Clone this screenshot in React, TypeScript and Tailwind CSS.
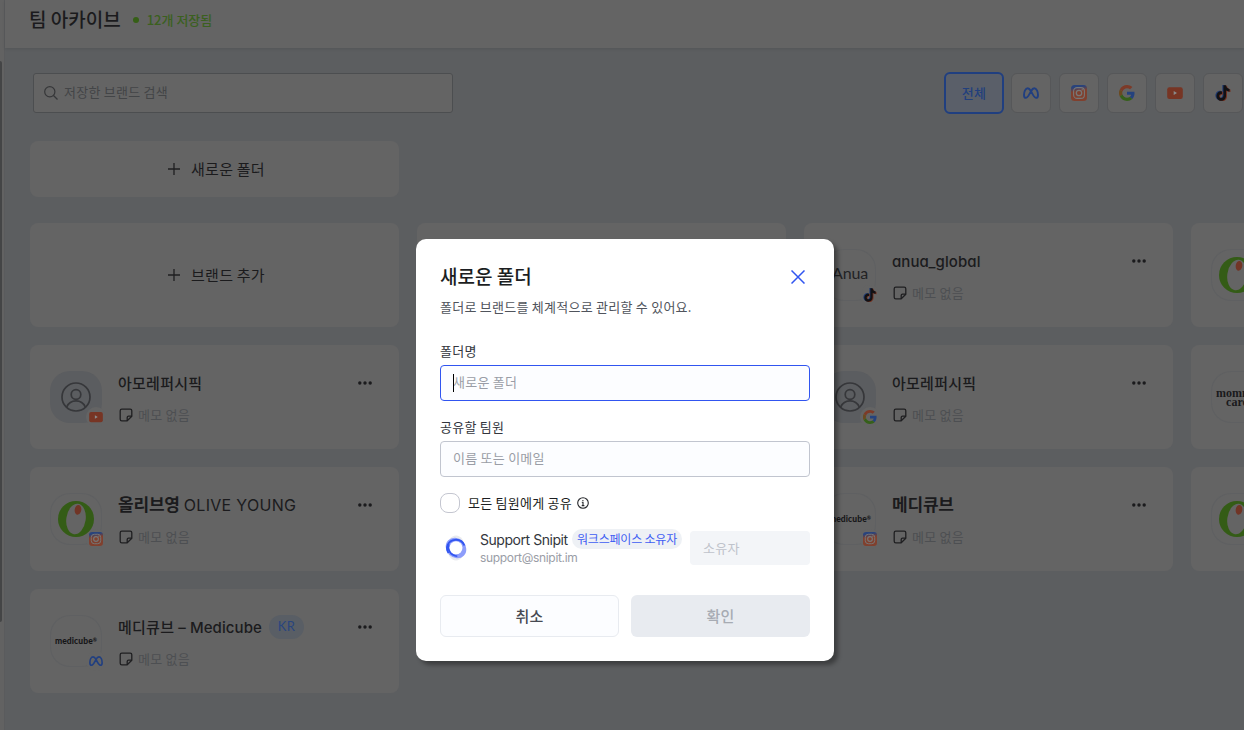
import { useState } from "react";

type Channel = "meta" | "instagram" | "google" | "youtube" | "tiktok";
type Logo = "person" | "olive" | "medicube" | "anua" | "mommy";

interface Brand {
    id: number;
    name?: string;
    latin?: string;
    bold?: boolean;
    country?: string;
    logo?: Logo;
    channel?: Channel;
}

const channels: Channel[] = ["meta", "instagram", "google", "youtube", "tiktok"];

const brands: Brand[] = [
    { id: 1 },
    { id: 2, latin: "anua_global", logo: "anua", channel: "tiktok" },
    { id: 3, name: "올리브영", logo: "olive", channel: "google" },
    { id: 4, name: "아모레퍼시픽", logo: "person", channel: "youtube" },
    { id: 5 },
    { id: 6, name: "아모레퍼시픽", logo: "person", channel: "google" },
    { id: 7, name: "마미케어", logo: "mommy", channel: "meta" },
    { id: 8, name: "올리브영", latin: "OLIVE YOUNG", bold: true, logo: "olive", channel: "instagram" },
    { id: 9 },
    { id: 10, name: "메디큐브", bold: true, logo: "medicube", channel: "instagram" },
    { id: 11, name: "올리브영", logo: "olive", channel: "meta" },
    { id: 12, name: "메디큐브", latin: "– Medicube", country: "KR", logo: "medicube", channel: "meta" },
];

function ChannelIcon({ channel, className }: { channel: Channel; className: string }) {
    if (channel === "meta")
        return (
            <svg viewBox="0 0 16 16" className={className} fill="none" stroke="#213f80" strokeWidth="1.900">
                <path d="M8 6.200C6.900 4.300 6 3.200 4.700 3.200 2.500 3.200 1 6.600 1 9.900c0 1.900.7 3 2 3 1.600 0 2.700-2 5-6.700 1.100-2 2-3 3.300-3 2.200 0 3.700 3.400 3.700 6.700 0 1.900-.7 3-2 3-1.600 0-2.700-2-5-6.700Z" />
            </svg>
        );

    if (channel === "instagram")
        return (
            <svg viewBox="0 0 16 16" className={className} fill="none">
                <defs>
                    <linearGradient id="ig" x1="7" y1="0" x2="8" y2="6" gradientUnits="userSpaceOnUse">
                        <stop offset="0.3" stopColor="#29437c" />
                        <stop offset="1" stopColor="#80402e" />
                    </linearGradient>
                </defs>
                <rect width="16" height="16" rx="3.500" fill="url(#ig)" />
                <rect x="2.600" y="2.600" width="10.800" height="10.800" rx="3.500" stroke="#777" strokeWidth="1.100" />
                <circle cx="8" cy="8" r="2.700" stroke="#777" strokeWidth="1.300" />
                <circle cx="11.200" cy="4.800" r="0.700" fill="#777" />
            </svg>
        );

    if (channel === "google")
        return (
            <svg viewBox="0 0 48 48" className={className}>
                <path fill="#24427e" d="M46.500 24.500c0-1.600-.1-3.100-.4-4.500H24v9h12.700c-.6 3-2.300 5.500-4.800 7.100l7.400 5.800c4.400-4 7.200-10 7.200-17.400Z" />
                <path fill="#7d3a28" d="M24 9.500c3.500 0 6.700 1.200 9.200 3.600l6.900-6.900C35.900 2.400 30.500 0 24 0 14.600 0 6.500 5.400 2.600 13.200l8 6.200C12.400 13.700 17.700 9.500 24 9.500Z" />
                <path fill="#6b4a20" d="M10.500 28.600a14.500 14.500 0 0 1 0-9.200l-8-6.200a24 24 0 0 0 0 21.600l8-6.200Z" />
                <path fill="#36601a" d="M24 48c6.500 0 11.900-2.100 15.900-5.800l-7.700-6c-2.200 1.500-4.900 2.300-8.200 2.300-6.300 0-11.600-4.200-13.500-9.900l-8 6.200C6.500 42.600 14.600 48 24 48Z" />
            </svg>
        );

    if (channel === "youtube")
        return (
            <svg viewBox="0 0 16 16" className={className}>
                <rect x="0.200" y="2.300" width="15.600" height="11.600" rx="2.200" fill="#773524" />
                <path d="M6.700 6v4L10 8Z" fill="#8b8b8b" />
            </svg>
        );

    const note = "M8.400 1h2.400c.2 1.900 1.300 3.100 3.200 3.300v2.400c-1.200 0-2.300-.4-3.200-1v4.900c0 2.800-2 4.700-4.500 4.700S2 13.300 2 10.900c0-2.700 2.200-4.700 5-4.400v2.600c-1.400-.3-2.500.5-2.500 1.700 0 1.100.8 1.900 1.900 1.900s2-.8 2-2.200V1Z";
    return (
        <svg viewBox="0.7 0.7 14.600 14.800" className={className}>
            <path d={note} fill="#203a70" transform="translate(-1 -.4)" />
            <path d={note} fill="#73301f" transform="translate(.9 .5)" />
            <path d={note} fill="#111114" />
        </svg>
    );
}

function BrandLogo({ logo }: { logo: Logo }) {
    if (logo === "person")
        return (
            <svg viewBox="0 0 32 32" className="size-8" fill="none" stroke="#36373a" strokeWidth="1.700">
                <circle cx="16" cy="16" r="14" />
                <circle cx="16" cy="13.500" r="4.800" />
                <path d="M6.700 26C8.500 21.800 12 19.900 16 19.900s7.500 1.900 9.300 6.100" />
            </svg>
        );

    if (logo === "olive")
        return (
            <svg viewBox="0 0 36 36" className="size-9">
                <circle cx="18" cy="18" r="18" fill="#345c16" />
                <ellipse cx="18" cy="18" rx="9.700" ry="15.300" fill="#646464" transform="rotate(8 18 18)" />
                <ellipse cx="20" cy="8.800" rx="3.300" ry="4.900" fill="#713526" transform="rotate(8 20 8.800)" />
            </svg>
        );

    if (logo === "anua")
        return <span className="-mt-1 font-[Lato] text-[16px] leading-4 tracking-[-0.2px] text-[#222224]">Anua</span>;

    if (logo === "mommy")
        return (
            <div className="flex flex-col items-center font-['Liberation_Serif'] text-[12px] leading-[10px] font-bold tracking-normal text-[#1a1a1c]">
                <span>mommy</span>
                <span className="-mt-px">care</span>
            </div>
        );

    return (
        <span className="relative font-[Lato] text-[8.5px] leading-3 font-black tracking-[0.1px] text-[#161618]">
            medicube<sup className="text-[5px]">®</sup>
        </span>
    );
}

function NoteIcon() {
    return (
        <svg viewBox="0 0 14 14" className="size-[14px]" fill="none" stroke="#1f1f21" strokeWidth="1.300" strokeLinejoin="round">
            <path d="M2.800 1.200h8.400c.9 0 1.600.7 1.600 1.600v5.400l-4.600 4.600H2.800c-.9 0-1.600-.7-1.600-1.600V2.800c0-.9.7-1.600 1.600-1.600Z" />
            <path d="M12.800 8.200H9.600c-.8 0-1.400.6-1.400 1.400v3.200" />
        </svg>
    );
}

function PlusIcon() {
    return (
        <svg viewBox="0 0 12 12" className="size-3" stroke="#1f1f21" strokeWidth="1.300">
            <path d="M6 0v12M0 6h12" />
        </svg>
    );
}

function BrandCard({ brand }: { brand: Brand }) {
    if (!brand.logo || !brand.channel)
        return <div className="h-[104px] rounded-lg bg-[#646464]" />;

    return (
        <div className="flex h-[104px] rounded-lg bg-[#646464] pt-[26px] pr-[27px] pl-5">
            <div
                className={`relative flex size-[52px] shrink-0 items-center justify-center rounded-[20px] ${
                    brand.logo === "person" ? "bg-[#5b5d60]" : "inset-ring inset-ring-[#5f6062]"
                }`}
            >
                <BrandLogo logo={brand.logo} />
                <span className="absolute -right-1 -bottom-1 flex size-5 items-center justify-center rounded-full bg-[#646464]">
                    <ChannelIcon channel={brand.channel} className="size-[14px]" />
                </span>
            </div>

            <div className="ml-4 flex-1">
                <div className="flex h-6 items-center whitespace-nowrap">
                    {brand.name && (
                        <span className={brand.bold ? "-mt-0.5 text-[17px] font-bold tracking-[-0.2px]" : "font-medium"}>
                            {brand.name}
                        </span>
                    )}
                    {brand.latin && (
                        <span
                            className={`font-[Inter] [font-feature-settings:'cv11'] ${
                                brand.bold
                                    ? "ml-1 text-base tracking-[0.3px]"
                                    : "mt-0.5 text-[15px] font-medium tracking-[0.1px]"
                            } ${brand.country ? "ml-1" : ""}`}
                        >
                            {brand.latin}
                        </span>
                    )}
                    {brand.country && (
                        <span className="ml-[7px] flex h-6 w-[35px] items-center justify-center rounded-full bg-[#595e65] pb-px font-[Lato] text-[13px] tracking-[0.3px] text-[#29457f]">
                            {brand.country}
                        </span>
                    )}
                </div>
                <div className="mt-2 ml-px flex h-6 items-center gap-[5px]">
                    <NoteIcon />
                    <span className="-mt-px text-[13px] text-[#4d4f52]">메모 없음</span>
                </div>
            </div>

            <svg viewBox="0 0 14 4" className="mt-2.5 h-1 w-[14px]" fill="#1b1b1d">
                <circle cx="1.800" cy="2" r="1.700" />
                <circle cx="7" cy="2" r="1.700" />
                <circle cx="12.200" cy="2" r="1.700" />
            </svg>
        </div>
    );
}

function NewFolderModal() {
    const [folder, setFolder] = useState("");
    const [member, setMember] = useState("");

    return (
        <div className="flex h-[422px] w-[418px] flex-col rounded-[10px] bg-white p-6 shadow-[4px_4px_4px_rgba(0,0,0,0.35)]">
            <div className="flex h-7 items-center justify-between">
                <h2 className="-mt-0.5 text-[19px] font-medium tracking-normal text-[#1c1e22]">새로운 폴더</h2>
                <svg viewBox="0 0 14 14" className="mr-[5px] size-[14px]" stroke="#3155f0" strokeWidth="1.500">
                    <path d="M.5.5l13 13M13.500.5l-13 13" />
                </svg>
            </div>
            <p className="mt-1.5 text-[13px] leading-5 text-[#50545c]">
                폴더로 브랜드를 체계적으로 관리할 수 있어요.
            </p>

            {/* 폴더명 */}
            <label className="mt-6 text-[13px] leading-5 text-[#33363d]">폴더명</label>
            <div className="relative mt-1">
                <input
                    value={folder}
                    onChange={(e) => setFolder(e.target.value)}
                    placeholder="새로운 폴더"
                    className="block h-9 w-full rounded border border-[#3155f0] bg-[#fcfdff] px-3 pb-[3px] text-[13px] tracking-[0.25px] outline-none placeholder:text-[#9a9da6]"
                />
                <span className="absolute top-[9px] left-[13px] h-[18px] w-px bg-black" />
            </div>

            {/* 공유할 팀원 */}
            <label className="mt-4 text-[13px] leading-5 text-[#33363d]">공유할 팀원</label>
            <input
                value={member}
                onChange={(e) => setMember(e.target.value)}
                placeholder="이름 또는 이메일"
                className="mt-1 block h-9 w-full shrink-0 rounded border border-[#c1c5cf] bg-[#fcfdff] px-3 pb-[3px] text-[13px] tracking-[0.25px] outline-none placeholder:text-[#9a9da6]"
            />

            <div className="mt-4 flex h-5 items-center text-[13px] text-[#1c1e22]">
                <span className="size-5 rounded-[8px] border border-[#c4c6d0]" />
                <span className="ml-2">모든 팀원에게 공유</span>
                <svg viewBox="0 0 12 12" className="ml-[5px] size-3" fill="none" stroke="#26282c" strokeWidth="1.100">
                    <circle cx="6" cy="6" r="5.300" />
                    <path d="M4.800 5.300H6v3.300M4.700 8.600h2.700M5.900 3v1.100" />
                </svg>
            </div>

            <div className="mt-4 flex h-[38px] items-center">
                <svg viewBox="0 0 32 32" className="size-8" fill="none">
                    <ellipse cx="16" cy="16" rx="9" ry="12.500" fill="#e8eaee" />
                    <ellipse cx="16" cy="16" rx="11" ry="9.500" fill="#8d9dfb" transform="rotate(45 16 16)" />
                    <circle cx="16" cy="15.800" r="6.500" fill="#fff" />
                    <path d="M8.500 21C5 15.500 8 8.500 15 7.800c4.500-.4 8 2.200 9.400 5.700" stroke="#3155f0" strokeWidth="1.800" />
                    <path d="M8.800 12c-2 5 1.500 11.500 8.500 12.200" stroke="#3155f0" strokeWidth="1.600" />
                </svg>
                <div className="ml-2 w-[202px] self-start">
                    <div className="flex h-5 items-center whitespace-nowrap">
                        <span className="w-[92px] pt-px font-[Inter] text-sm tracking-[-0.45px] text-[#33363d]">
                            Support Snipit
                        </span>
                        <span className="flex h-5 w-[110px] items-center justify-center rounded-full bg-[#eef1f5] pb-px text-xs tracking-[-0.2px] text-[#3f5ef3]">
                            워크스페이스 소유자
                        </span>
                    </div>
                    <div className="font-[Inter] text-xs leading-[18px] tracking-[-0.32px] text-[#9a9da6] [font-feature-settings:'cv11']">
                        support@snipit.im
                    </div>
                </div>
                <div className="ml-2 flex h-[34px] w-[120px] items-center rounded bg-[#f3f5f8] pl-[13px] text-[13px] text-[#bfc3cb]">
                    소유자
                </div>
            </div>

            {/* BUTTONS */}
            <div className="mt-7 flex gap-3 font-medium">
                <button className="h-[42px] w-[179px] rounded-md border border-[#e8ebf0] bg-[#fcfdff] text-[#464a52]">
                    취소
                </button>
                <button disabled className="h-[42px] w-[179px] rounded-md bg-[#e8ebf0] text-[#a7abb3]">
                    확인
                </button>
            </div>
        </div>
    );
}

export default function App() {
    return (
        <div className="relative flex h-[730px] w-[1244px] overflow-hidden bg-[#5c5e60] font-['Noto_Sans_CJK_KR',sans-serif] text-[15px] tracking-[0.25px] text-[#1b1b1d]">
            {/* sidebar edge */}
            <div className="w-[5px] shrink-0 border-r border-[#5a5b5d] bg-[#626262]">
                <div className="mt-[61px] h-[561px] w-0.5 rounded-r bg-[#444546]" />
            </div>

            <div className="min-w-0 flex-1">
                <header className="flex h-12 items-center bg-[#646464] pb-[9px] pl-6 shadow-[0_1px_3px_rgba(0,0,0,0.1)]">
                    <h1 className="text-[19px] font-medium tracking-normal">팀 아카이브</h1>
                    <span className="ml-3 size-1.5 rounded-full bg-[#365f16]" />
                    <span className="ml-2 text-[13px] font-medium tracking-normal text-[#3b601f]">12개 저장됨</span>
                </header>

                <main className="pt-6 pl-[25px]">
                    <div className="ml-[3px] flex items-center">
                        <div className="-mt-px flex h-10 w-[420px] shrink-0 items-center rounded-[3px] border border-[#4c4e50] bg-[#646464] pl-2.5">
                            <svg viewBox="0 0 14 14" className="size-[14px]" fill="none" stroke="#363739" strokeWidth="1.200">
                                <circle cx="5.800" cy="5.800" r="5.100" />
                                <path d="M9.500 9.500l4 4" />
                            </svg>
                            <span className="-mt-px ml-1.5 text-[13px] text-[#434547]">저장한 브랜드 검색</span>
                        </div>

                        <div className="ml-[491px] flex shrink-0 items-center gap-2">
                            <button className="-mr-px h-[42px] w-[60px] rounded-md border-2 border-[#203f80] bg-[#5a5f69] pb-px text-[13px] font-medium text-[#223f7d]">
                                전체
                            </button>
                            {channels.map((channel) => (
                                <button
                                    key={channel}
                                    className="flex size-10 items-center justify-center rounded-md border border-[#565759] bg-[#646464]"
                                >
                                    <ChannelIcon channel={channel} className="size-4" />
                                </button>
                            ))}
                        </div>
                    </div>

                    <div className="mt-[27px] flex h-14 w-[369px] items-center justify-center gap-[11px] rounded-lg bg-[#646464] pl-1">
                        <PlusIcon />
                        <span>새로운 폴더</span>
                    </div>

                    <div className="mt-[26px] grid grid-cols-[repeat(4,369px)] gap-[18px]">
                        <div className="flex h-[104px] items-center justify-center gap-[11px] rounded-lg bg-[#646464] pl-1">
                            <PlusIcon />
                            <span>브랜드 추가</span>
                        </div>
                        {brands.map((brand) => (
                            <BrandCard key={brand.id} brand={brand} />
                        ))}
                    </div>
                </main>
            </div>

            <div className="absolute inset-0 pt-[239px] pl-[416px]">
                <NewFolderModal />
            </div>
        </div>
    );
}
